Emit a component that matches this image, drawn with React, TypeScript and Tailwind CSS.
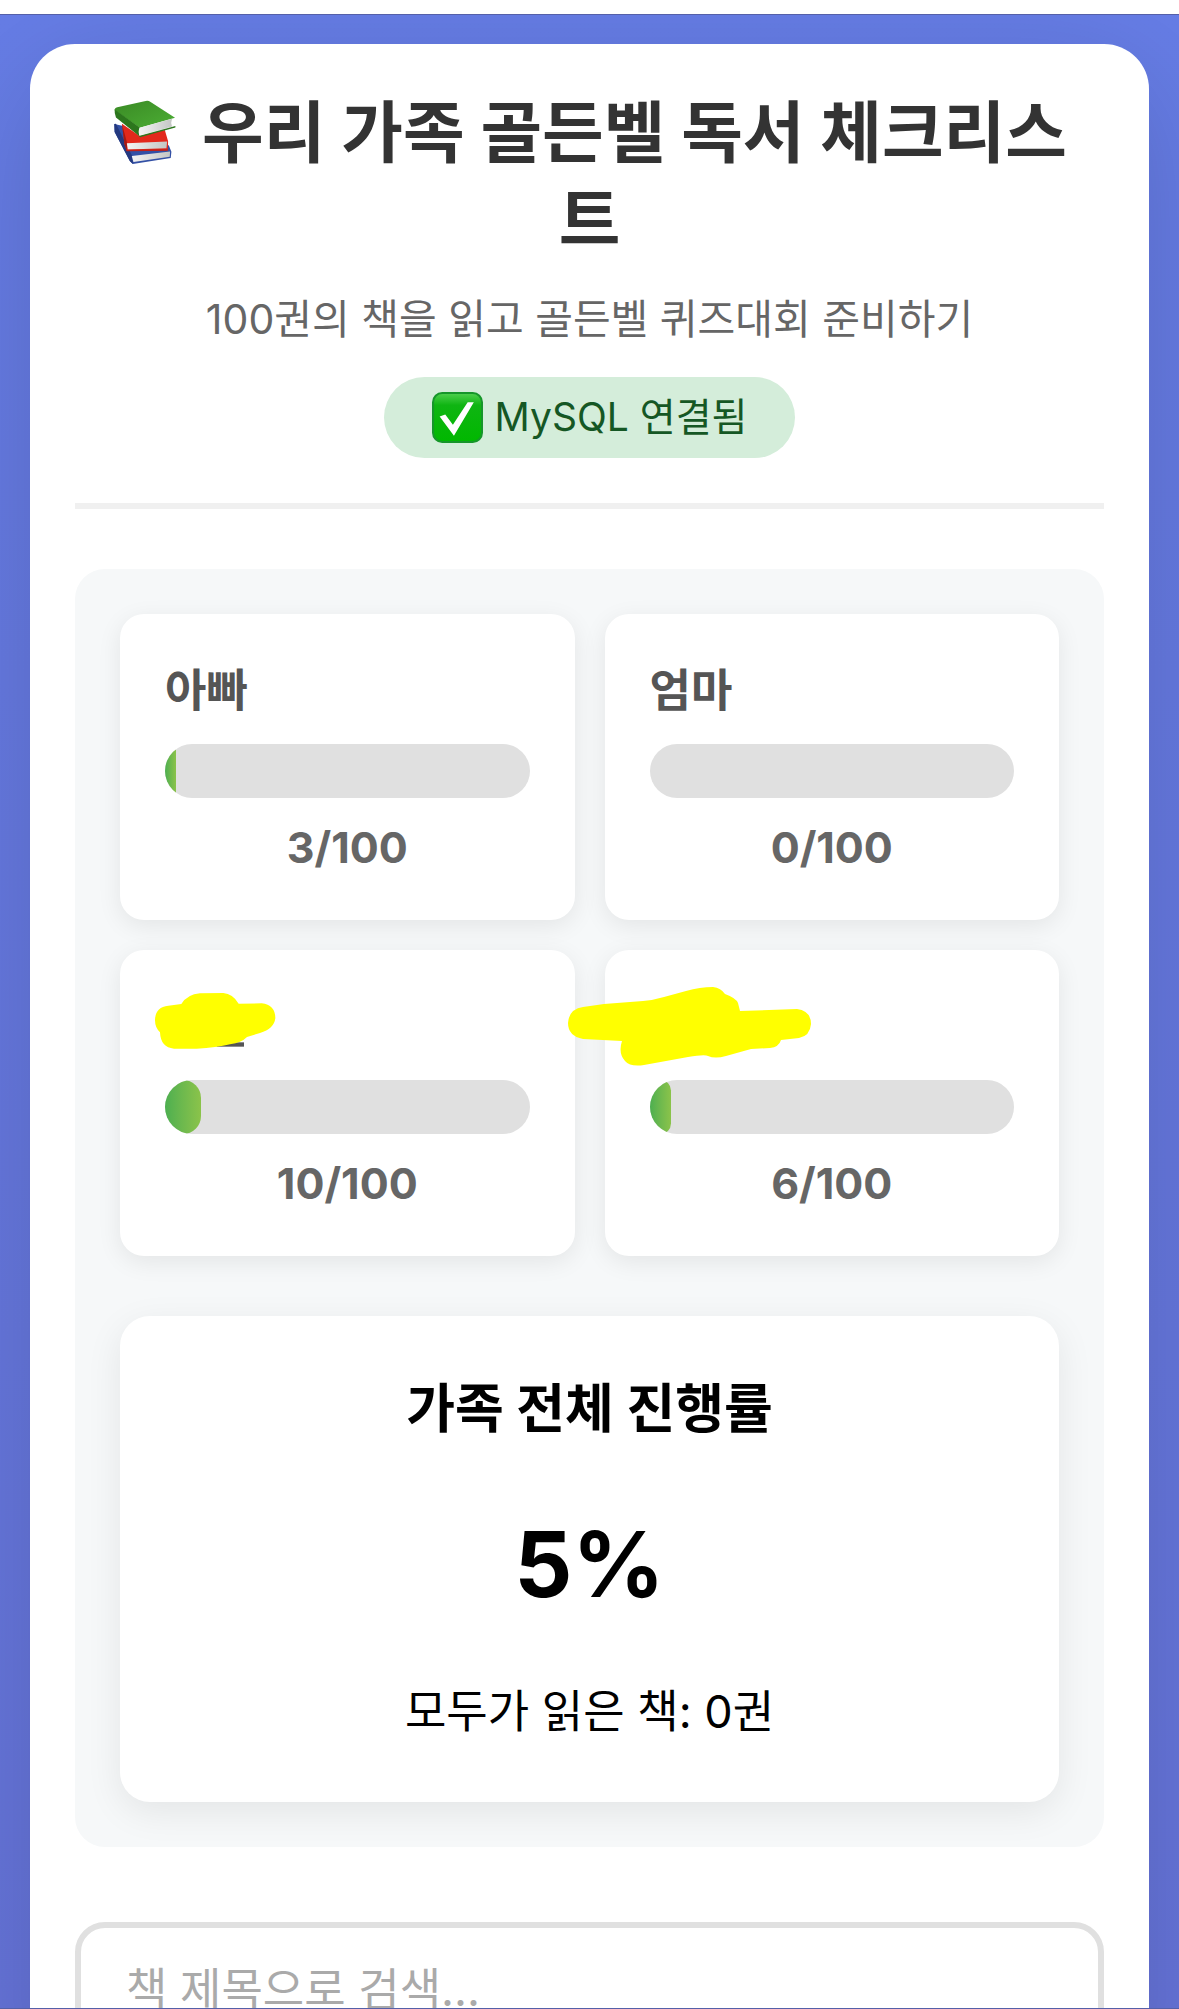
import type { ReactNode } from "react";

type Reader = { label: string; name: ReactNode; read: number };

function BooksIcon() {
  return (
    <svg viewBox="38 22 200 200" className="mr-6 inline-block size-[66px] align-[-8px]" aria-hidden="true">
      <defs>
        <linearGradient id="greenCover" x1="0" y1="0" x2="1" y2="1">
          <stop offset="0" stopColor="#3a8a25" />
          <stop offset="1" stopColor="#4cae34" />
        </linearGradient>
        <linearGradient id="paper" x1="0" y1="0" x2="1" y2="0">
          <stop offset="0" stopColor="#f4f4f4" />
          <stop offset="1" stopColor="#c3c6c4" />
        </linearGradient>
      </defs>
      <path d="M45 98 L72 104 L82 176 L210 162 L218 182 L216 201 L101 219 L92 210 L46 122Z" fill="#3350a5" />
      <path d="M45 98 L50 97 L100 196 L101 219 L92 210 L46 122Z" fill="#24397f" />
      <path d="M98 195 L214 181 L213 197 L103 213Z" fill="url(#paper)" />
      <path d="M68 97 L122 134 L198 116 L208 150 L207 177 L83 179 L76 160Z" fill="#e2281c" />
      <path d="M68 97 L84 156 L83 179 L76 160Z" fill="#a31a14" />
      <path d="M83 156 L205 151 L203 171 L86 175Z" fill="url(#paper)" />
      <path d="M80 176 L208 174 L207 179 L83 180Z" fill="#c02018" />
      <path d="M46 56 Q45 50 54 47 L140 28 Q148 26 155 31 L229 79 L122 109Z" fill="url(#greenCover)" />
      <path d="M46 54 L122 108 Q116 121 122 136 L50 78 Q45 66 46 54Z" fill="#2c761d" />
      <path d="M122 109 L220 82 Q215 94 220 105 L122 133 Q117 121 122 109Z" fill="url(#paper)" />
      <path d="M120 134 L230 104 L230 108 L123 138Z" fill="#2c761d" />
    </svg>
  );
}

function CheckIcon() {
  return (
    <svg viewBox="0 0 50 50" className="size-[51px]" aria-hidden="true">
      <defs>
        <linearGradient id="tick" x1="0" y1="0" x2="0" y2="1">
          <stop offset="0" stopColor="#4fd04f" />
          <stop offset="0.25" stopColor="#0fb512" />
          <stop offset="1" stopColor="#00b800" />
        </linearGradient>
      </defs>
      <rect x="1" y="1" width="48" height="48" rx="9" fill="url(#tick)" stroke="#16962a" strokeWidth="2" />
      <path d="M7.500 24 L13 22 L20.500 32 L35 10 H41 L21.500 43Z" fill="#fff" />
    </svg>
  );
}

function ShortScribble() {
  return (
    <svg viewBox="159 180 372 180" className="absolute -top-1 -left-3 h-[60px] w-[124px]" aria-hidden="true">
      <path d="M350 334 H432 V347 H350Z" fill="#555" />
      <path
        d="M165 268 Q165 228 205 224 L244 219 Q262 190 300 187 L370 186 Q398 188 416 218 L485 217 Q526 222 526 262 Q522 294 480 306 L441 318 Q425 335 390 340 Q350 350 290 353 L222 353 Q182 350 180 304 Q165 290 165 268Z"
        fill="#ff0"
      />
    </svg>
  );
}

function LongScribble() {
  return (
    <svg viewBox="0 0 244 80" className="absolute -top-2 -left-[82px] h-20 w-[244px]" aria-hidden="true">
      <path
        d="M0 36 Q1 22 15 20 L36 17 L75 14 Q86 13 96 10 L118 4 Q132 0 145 0 Q153 1 157 7 Q168 11 170 16 L172 24 L229 22 Q243 24 243 37 Q242 49 231 51 L213 53 Q211 60 202 61 L183 62 L158 69 Q147 72 140 69 Q137 67 120 70 L76 78 Q62 80 57 74 Q50 66 54 54 L15 52 Q0 49 0 36Z"
        fill="#ff0"
      />
    </svg>
  );
}

const readers: Reader[] = [
  { label: "아빠", name: "아빠", read: 3 },
  { label: "엄마", name: "엄마", read: 0 },
  { label: "가려진 이름 1", name: <ShortScribble />, read: 10 },
  { label: "가려진 이름 2", name: <LongScribble />, read: 6 },
];

function ReaderCard({ label, name, read }: Reader) {
  return (
    <article className="rounded-3xl bg-white p-[45px] shadow-[0_6px_24px_rgba(0,0,0,0.08)]">
      <h2 className="relative mb-[21px] h-16 text-[45px] leading-[64px] font-bold text-[#555]">{name}</h2>
      <div
        role="progressbar"
        aria-label={label}
        aria-valuenow={read}
        aria-valuemax={100}
        className="h-[54px] overflow-hidden rounded-full bg-[#e0e0e0]"
      >
        <div className="h-full rounded-full bg-linear-to-r from-[#4caf50] to-[#8bc34a]" style={{ width: `${read}%` }} />
      </div>
      <p className="mt-[22px] text-center text-[43px] leading-[55px] font-bold text-[#666]">{read}/100</p>
    </article>
  );
}

export default function App() {
  return (
    <div className="flex h-screen flex-col overflow-hidden bg-white font-['Inter','Noto_Sans_CJK_KR',sans-serif]">
      <div className="h-[14px] shrink-0" />
      <main className="min-h-0 flex-1 overflow-hidden border-y border-[#5560a8] bg-linear-to-b from-[#667de6] to-[#6674da] px-[30px] pt-[29px]">
        <div className="rounded-[45px] bg-white p-[45px] shadow-[0_30px_120px_rgba(0,0,0,0.16)]">
          <header className="mb-[60px] border-b-6 border-[#f0f0f0] pb-[45px] text-center">
            <h1 className="px-8 text-[67px] leading-[87px] font-bold break-all text-[#333]">
              <BooksIcon />
              우리 가족 골든벨 독서 체크리스트
            </h1>
            <p className="mt-[26px] text-[41px] leading-[60px] text-[#666]">
              100권의 책을 읽고 골든벨 퀴즈대회 준비하기
            </p>
            <div className="mx-auto mt-7 flex h-[81px] w-fit items-center gap-3 rounded-full bg-[#d4edda] px-12 text-[39px] text-[#155724]">
              <CheckIcon />
              <span>MySQL 연결됨</span>
            </div>
          </header>

          <section className="rounded-[30px] bg-[#f6f8f9] p-[45px]">
            <div className="grid grid-cols-2 gap-[30px]">
              {readers.map((reader) => (
                <ReaderCard key={reader.label} {...reader} />
              ))}
            </div>
            <div className="mt-[60px] rounded-[30px] bg-white px-[45px] pt-[55px] pb-14 text-center text-black shadow-[0_10px_36px_rgba(0,0,0,0.08)]">
              <h2 className="text-[53px] leading-[76px] font-bold">가족 전체 진행률</h2>
              <p className="mt-[47px] text-[91px] leading-[140px] font-bold">5%</p>
              <p className="mt-11 text-[45px] leading-[68px]">모두가 읽은 책: 0권</p>
            </div>
          </section>

          <input
            type="search"
            aria-label="책 제목으로 검색"
            placeholder="책 제목으로 검색..."
            className="mt-[75px] block h-[134px] w-full rounded-[30px] border-6 border-[#e0e0e0] bg-white px-[45px] text-[45px] text-[#333] outline-none placeholder:text-[#aaa]"
          />
        </div>
      </main>
    </div>
  );
}
